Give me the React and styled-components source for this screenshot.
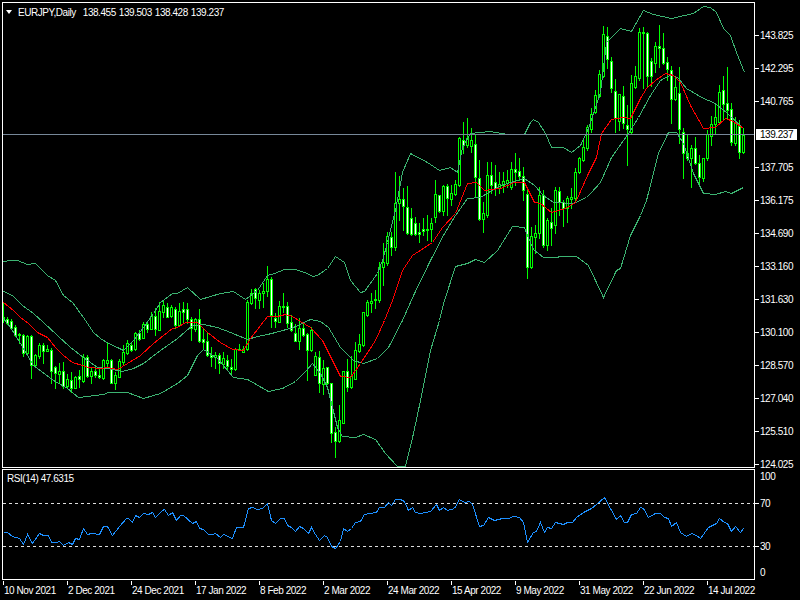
import React from "react";
import styled, { createGlobalStyle } from "styled-components";

const GlobalStyle = createGlobalStyle`
  html, body {
    margin: 0;
    background: #000;
  }
`;

// all chart data is in page pixels, the way the terminal drew it
const BAR_STEP = 4;
const FIRST_BAR_X = 3;

// [high, bodyTop, bodyBottom, low, bear]
const candles = [
  [303,317,319,322,0],[317,319,323,324,1],[319,321,328,329,1],[325,327,335,336,1],[333,334,335,343,0],
  [334,335,353,356,1],[335,336,353,355,0],[335,336,365,378,1],[354,355,365,366,0],[343,345,356,358,0],
  [343,345,351,363,1],[345,349,351,351,0],[348,350,371,383,1],[366,367,373,388,1],[363,371,374,383,0],
  [362,371,386,388,1],[374,379,386,387,0],[372,380,388,392,1],[376,377,388,388,0],[370,376,379,387,1],
  [354,357,381,382,0],[355,357,376,377,1],[367,371,376,383,0],[367,371,375,377,1],[367,375,377,378,1],
  [359,360,378,379,0],[343,360,363,368,0],[359,360,383,383,1],[372,375,383,389,0],[359,361,377,377,0],
  [345,352,362,364,0],[340,343,353,354,0],[343,345,350,351,1],[332,333,349,350,0],[330,333,339,340,1],
  [322,324,338,338,0],[322,324,329,332,1],[312,316,329,329,0],[308,316,329,335,1],[302,311,330,330,0],
  [300,305,312,317,0],[303,307,317,317,1],[305,307,316,317,0],[307,309,325,328,1],[303,311,325,326,0],
  [302,309,312,322,1],[303,309,319,323,1],[317,319,328,340,1],[318,319,329,331,0],[309,319,341,342,1],
  [329,339,342,349,1],[332,341,355,356,1],[347,355,357,366,1],[352,355,357,368,0],[353,355,363,373,1],
  [352,358,364,368,0],[355,360,366,369,1],[359,367,369,373,1],[348,349,369,370,0],[344,349,350,350,0],
  [346,349,352,352,0],[300,302,349,350,0],[289,293,303,304,0],[288,289,298,308,1],[290,293,300,308,0],
  [283,291,293,307,0],[266,279,291,296,0],[277,279,315,327,1],[313,318,321,327,1],[301,306,322,322,0],
  [293,306,307,312,0],[302,306,323,327,1],[315,322,330,331,1],[324,333,341,341,1],[318,328,341,349,0],
  [322,328,335,336,1],[333,334,350,380,1],[327,330,350,351,0],[352,356,375,375,0],[351,357,383,392,1],
  [360,368,384,394,0],[367,367,383,384,1],[383,383,433,442,1],[427,432,441,457,1],[405,420,441,442,0],
  [371,371,423,423,0],[359,371,387,391,1],[356,376,387,388,0],[342,350,379,379,0],[334,344,351,352,0],
  [312,312,345,346,0],[300,302,315,316,0],[293,301,303,312,0],[290,299,300,308,0],[262,267,300,302,0],
  [243,262,267,285,0],[232,236,263,265,0],[232,237,247,255,1],[172,203,247,250,0],[176,199,203,220,0],
  [188,199,206,230,1],[186,207,233,234,1],[208,218,234,235,1],[217,223,234,235,1],[223,232,234,242,1],
  [218,229,231,235,1],[215,229,230,240,0],[218,223,229,241,0],[180,194,217,222,0],[195,195,211,212,1],
  [185,186,211,215,0],[184,186,198,215,1],[185,193,199,205,0],[180,184,194,195,0],[137,138,185,186,0],
  [122,140,145,153,1],[118,138,145,147,0],[128,140,146,152,0],[135,144,177,196,1],[160,178,219,220,1],
  [202,213,219,232,0],[162,175,215,217,0],[162,175,185,193,1],[165,182,188,195,1],[172,184,188,193,0],
  [172,181,185,192,0],[170,180,183,187,0],[162,169,187,189,0],[153,169,172,185,1],[158,171,176,180,1],
  [167,176,190,200,1],[188,194,267,278,1],[227,236,267,268,0],[225,233,237,253,0],[187,195,233,238,0],
  [190,195,245,247,1],[218,220,245,250,0],[208,222,228,245,1],[187,190,225,233,0],[187,191,202,215,1],
  [200,202,208,226,1],[196,198,208,222,0],[188,197,199,208,0],[168,172,198,200,0],[157,158,172,173,0],
  [138,147,160,161,0],[125,127,148,150,0],[108,114,129,132,0],[90,95,112,113,0],[70,74,96,97,0],
  [26,34,76,77,0],[27,36,59,68,1],[57,61,88,92,1],[79,91,118,132,1],[94,94,121,130,0],
  [86,96,123,128,1],[105,125,129,165,1],[75,83,132,133,0],[66,76,87,88,0],[28,32,78,80,0],
  [27,32,33,88,0],[32,33,76,87,1],[58,61,76,86,1],[42,46,63,72,0],[25,46,48,67,1],
  [33,48,63,64,1],[57,62,69,80,1],[66,70,99,123,1],[76,87,99,100,0],[67,93,129,143,1],
  [128,132,153,178,1],[135,153,158,160,1],[145,148,158,187,0],[137,148,163,164,1],[155,163,177,183,1],
  [158,158,178,181,0],[130,134,158,160,0],[116,124,136,145,0],[105,117,124,133,0],[85,92,122,123,0],
  [76,90,104,120,1],[67,103,110,118,1],[103,109,142,145,1],[117,122,143,145,0],[120,126,152,158,1],
  [128,135,152,153,0],
];

const upperBand = [
  [3,261],[10,260],[17,260],[27,264],[35,263],[47,275],[55,280],[63,295],[72,302],[83,317],[93,332],[100,338],
  [108,343],[117,347],[123,350],[133,340],[143,327],[153,313],[160,302],[172,293],[177,293],[187,287],[200,299],
  [220,293],[233,291],[245,299],[257,290],[267,275],[274,273],[284,269],[295,269],[307,273],[312,276],[317,275],
  [327,268],[335,256],[344,262],[350,280],[360,292],[364,291],[377,273],[382,260],[387,242],[395,210],[402,172],
  [410,153],[427,162],[439,170],[450,167],[457,172],[462,147],[470,133],[490,131],[507,134],[524,134],[530,122],
  [533,119],[538,122],[545,133],[551,147],[563,147],[571,152],[580,145],[588,128],[600,92],[606,42],[620,28],
  [631,31],[643,10],[653,14],[671,18],[693,13],[703,6],[710,7],[716,12],[723,28],[730,35],[736,52],[744,72],
];

const middleBand = [
  [3,291],[12,295],[22,305],[33,313],[43,322],[57,335],[70,347],[83,357],[97,367],[107,368],[122,371],[133,368],
  [143,363],[160,350],[177,338],[192,325],[203,324],[217,327],[230,332],[247,339],[257,336],[267,334],[275,332],
  [293,327],[310,319],[320,321],[328,327],[340,347],[353,360],[363,363],[377,358],[388,347],[402,320],[414,293],
  [430,260],[444,233],[455,215],[467,198],[480,197],[500,185],[524,178],[534,185],[543,195],[553,202],[573,203],
  [586,197],[590,193],[600,182],[611,157],[628,133],[638,117],[650,95],[660,80],[671,74],[678,78],[686,88],
  [703,98],[713,102],[726,112],[743,128],
];

const lowerBand = [
  [3,318],[10,327],[20,343],[33,365],[53,380],[67,388],[78,397],[87,396],[103,394],[108,392],[127,392],[143,398],
  [160,393],[177,383],[187,375],[197,355],[203,349],[217,358],[233,377],[247,379],[268,391],[282,388],[295,381],
  [305,371],[312,363],[320,373],[327,387],[332,407],[337,427],[342,436],[355,437],[363,434],[375,439],[385,453],
  [397,466],[405,466],[413,433],[420,400],[430,350],[439,320],[444,300],[455,266],[467,263],[475,259],[484,262],
  [497,250],[512,226],[524,227],[527,235],[533,249],[543,257],[556,257],[560,256],[576,256],[588,265],[603,297],
  [616,270],[620,268],[630,235],[640,215],[646,200],[658,153],[668,132],[676,132],[683,143],[693,173],[703,193],
  [715,194],[725,191],[731,193],[743,187],
];

const movingAverage = [
  [3,302],[13,310],[20,317],[28,323],[37,332],[47,337],[55,347],[63,355],[72,362],[82,365],[88,367],[100,368],
  [107,367],[117,369],[127,363],[140,355],[153,343],[163,335],[172,328],[177,327],[185,322],[197,322],[207,332],
  [220,342],[232,349],[243,350],[250,338],[260,325],[267,316],[277,316],[285,314],[292,316],[300,321],[310,327],
  [322,340],[327,350],[340,376],[350,377],[360,363],[375,340],[384,320],[392,300],[402,270],[412,255],[432,242],
  [442,227],[455,213],[467,183],[476,182],[484,190],[500,188],[514,182],[524,182],[534,202],[540,203],[551,212],
  [565,208],[575,202],[588,173],[596,157],[601,133],[611,119],[623,117],[630,118],[640,98],[646,88],[655,80],
  [665,73],[673,75],[680,82],[690,105],[703,128],[715,127],[725,118],[733,121],[743,128],
];

const rsi = [
  [3,532],[7,532],[12,536],[19,538],[23,544],[27,534],[32,543],[39,533],[43,535],[48,535],[51,542],[56,542],[59,541],
  [63,545],[68,542],[72,544],[75,538],[79,539],[83,528],[87,534],[91,533],[99,534],[103,526],[107,526],[112,535],
  [119,526],[126,518],[128,518],[132,522],[135,515],[139,517],[143,513],[148,514],[152,512],[155,517],[162,510],
  [164,509],[168,515],[172,512],[176,520],[180,515],[183,515],[192,523],[196,521],[199,528],[203,529],[208,534],
  [212,534],[215,533],[220,537],[223,534],[232,538],[236,527],[243,527],[248,508],[252,507],[257,509],[262,508],
  [267,503],[271,520],[275,523],[280,518],[284,518],[287,525],[291,527],[295,531],[299,526],[303,528],[308,533],
  [311,527],[315,534],[319,540],[324,535],[327,537],[331,546],[335,548],[340,541],[343,528],[347,531],[351,528],
  [355,522],[360,521],[364,514],[370,513],[376,512],[379,507],[384,507],[388,502],[391,505],[395,499],[400,499],
  [404,501],[408,510],[412,507],[415,512],[420,513],[430,511],[436,504],[439,510],[443,507],[447,510],[454,508],
  [459,499],[464,502],[469,501],[472,504],[479,526],[483,525],[488,517],[494,520],[502,518],[508,518],[513,516],
  [519,517],[523,522],[527,542],[533,532],[536,531],[540,522],[544,532],[547,527],[551,528],[555,522],[563,524],
  [567,522],[572,522],[576,517],[583,512],[591,508],[596,504],[604,497],[616,519],[620,515],[624,522],[627,522],
  [631,514],[636,513],[640,507],[643,508],[648,517],[655,513],[660,513],[664,517],[668,518],[671,526],[676,522],
  [680,532],[686,536],[691,533],[696,535],[700,538],[708,527],[716,523],[719,518],[724,522],[727,523],[731,531],
  [735,526],[740,532],[743,528],
];

const priceLabels = [
  "143.825", "142.295", "140.765", "", "137.705", "136.175", "134.690",
  "133.160", "131.630", "130.100", "128.570", "127.040", "125.510", "124.025",
];

// rows are not even: 100 and 0 get pushed inside the pane
const rsiLabels = [
  { text: "100", height: 13 },
  { text: "70", height: 41, tick: true },
  { text: "30", height: 44, tick: true },
  { text: "0", height: 8 },
];

const dates = [
  "10 Nov 2021", "2 Dec 2021", "24 Dec 2021", "17 Jan 2022", "8 Feb 2022", "2 Mar 2022",
  "24 Mar 2022", "15 Apr 2022", "9 May 2022", "31 May 2022", "22 Jun 2022", "14 Jul 2022",
];

const Page = styled.div`
  width: 800px;
  height: 600px;
  box-sizing: border-box;
  padding: 2px 0 0 2px;
  background: #000;
  color: #fff;
  font-family: "Liberation Sans", Arial, sans-serif;
  font-size: 10px;
  letter-spacing: -0.45px;
  display: flex;
  flex-direction: column;
  gap: 1px;
  overflow: hidden;
`;

const PaneRow = styled.div`
  display: flex;
  align-items: flex-start;
  flex: none;
  height: ${(p) => p.$height}px;
`;

const Plot = styled.div`
  position: relative;
  width: 753px;
  height: 100%;
  box-sizing: border-box;
  border: 1px solid #fff;
`;

const ChartSvg = styled.svg`
  display: block;
  width: 751px;
  height: 100%;
  shape-rendering: crispEdges;
`;

const Legend = styled.div`
  position: absolute;
  top: 3px;
  left: 3px;
  display: flex;
  align-items: center;
  height: 12px;
  white-space: pre;
`;

const LegendArrow = styled.span`
  width: 0;
  height: 0;
  margin-right: 6px;
  border-left: 3.5px solid transparent;
  border-right: 3.5px solid transparent;
  border-top: 4px solid #fff;
`;

const LegendQuote = styled.span`
  margin-left: 7px;
  word-spacing: 0.7px;
`;

const PaneCaption = styled.div`
  position: absolute;
  top: 3px;
  left: 4px;
  height: 12px;
  line-height: 12px;
`;

const Scale = styled.div`
  position: relative;
  display: flex;
  flex-direction: column;
  padding-top: ${(p) => p.$top}px;
`;

const ScaleRow = styled.div`
  display: flex;
  flex: none;
  align-items: center;
  height: ${(p) => p.$height}px;
`;

const Tick = styled.span`
  flex: none;
  width: 4px;
  height: 1px;
  margin-right: 1px;
  background: ${(p) => (p.$hidden ? "transparent" : "#fff")};
`;

const CurrentPrice = styled.div`
  position: absolute;
  top: 127px;
  left: 1px;
  width: 41px;
  height: 11px;
  line-height: 11px;
  padding-left: 4px;
  box-sizing: border-box;
  background: #fff;
  color: #000;
`;

const TimeAxis = styled.div`
  display: flex;
  padding-left: 1px;
`;

const TimeCell = styled.div`
  flex: none;
  width: 64px;
  height: 17px;
  border-left: 1px solid transparent;
  box-sizing: border-box;
  position: relative;
  white-space: nowrap;
  padding-top: 4px;
  line-height: 12px;

  &::before {
    content: "";
    position: absolute;
    top: 0;
    left: -1px;
    width: 1px;
    height: 4px;
    background: #fff;
  }
`;

const toPoints = (line) => line.map(([x, y]) => `${x + 0.5},${y + 0.5}`).join(" ");

const Line = ({ data, color }) => (
  <polyline points={toPoints(data)} fill="none" stroke={color} strokeWidth="1" />
);

const Candle = ({ index, high, top, bottom, low, bear }) => {
  const x = FIRST_BAR_X + index * BAR_STEP;
  const inner = bottom - top - 1;
  return (
    <g>
      <rect x={x} y={high} width="1" height={low - high + 1} fill="#00ff00" />
      <rect x={x - 1} y={top} width="3" height={bottom - top + 1} fill="#00ff00" />
      {inner > 0 && (
        <rect x={x} y={top + 1} width="1" height={inner} fill={bear ? "#fff" : "#000"} />
      )}
    </g>
  );
};

const App = () => (
  <Page>
    <GlobalStyle />
    <PaneRow $height={466}>
      <Plot>
        <ChartSvg viewBox="3 3 751 464">
          {candles.map(([high, top, bottom, low, bear], index) => (
            <Candle
              key={index}
              index={index}
              high={high}
              top={top}
              bottom={bottom}
              low={low}
              bear={bear}
            />
          ))}
          <Line data={upperBand} color="#3cb371" />
          <Line data={middleBand} color="#3cb371" />
          <Line data={lowerBand} color="#3cb371" />
          <Line data={movingAverage} color="#ff0000" />
          <rect x="3" y="134" width="751" height="1" fill="#778899" />
        </ChartSvg>
        <Legend>
          <LegendArrow />
          EURJPY,Daily
          <LegendQuote>138.455 139.503 138.428 139.237</LegendQuote>
        </Legend>
      </Plot>
      <Scale $top={17}>
        {priceLabels.map((label, index) => (
          <ScaleRow key={index} $height={33}>
            <Tick $hidden={!label} />
            {label}
          </ScaleRow>
        ))}
        <CurrentPrice>139.237</CurrentPrice>
      </Scale>
    </PaneRow>
    <PaneRow $height={111}>
      <Plot>
        <ChartSvg viewBox="3 470 751 109">
          <line x1="3" x2="754" y1="503.5" y2="503.5" stroke="#ddd" strokeDasharray="3 3" />
          <line x1="3" x2="754" y1="546.5" y2="546.5" stroke="#ddd" strokeDasharray="3 3" />
          <Line data={rsi} color="#1e90ff" />
        </ChartSvg>
        <PaneCaption>RSI(14) 47.6315</PaneCaption>
      </Plot>
      <Scale $top={1}>
        {rsiLabels.map((row) => (
          <ScaleRow key={row.text} $height={row.height}>
            <Tick $hidden={!row.tick} />
            {row.text}
          </ScaleRow>
        ))}
      </Scale>
    </PaneRow>
    <TimeAxis>
      {dates.map((date) => (
        <TimeCell key={date}>{date}</TimeCell>
      ))}
    </TimeAxis>
  </Page>
);

export default App;
